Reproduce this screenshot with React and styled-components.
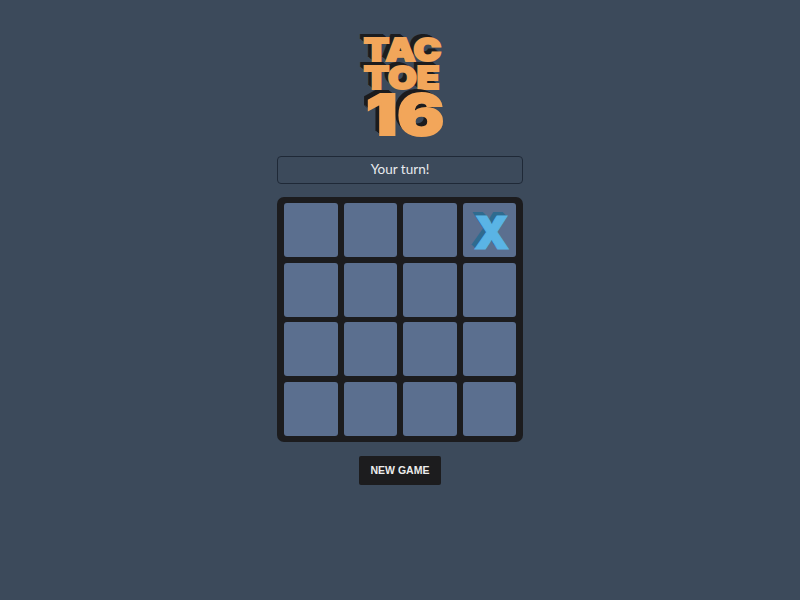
import React from "react";
import styled, { createGlobalStyle } from "styled-components";

const CELLS = ["", "", "", "X", "", "", "", "", "", "", "", "", "", "", "", ""];

function App() {
  return (
    <>
      <GlobalStyle />
      <Page>
        <Logo>
          <LogoWord>TAC</LogoWord>
          <LogoWord>TOE</LogoWord>
          <LogoNumber>16</LogoNumber>
        </Logo>
        <Status>Your turn!</Status>
        <Board>
          {CELLS.map((mark, i) => (
            <Cell key={i}>{mark && <Mark>{mark}</Mark>}</Cell>
          ))}
        </Board>
        <NewGame>NEW GAME</NewGame>
      </Page>
    </>
  );
}

const GlobalStyle = createGlobalStyle`
  html, body {
    margin: 0;
    padding: 0;
    background: #3c4a5b;
  }
`;
const Page = styled.div`
  width: 800px;
  height: 600px;
  box-sizing: border-box;
  padding-top: 36px;
  display: flex;
  flex-direction: column;
  align-items: center;
  background: #3c4a5b;
`;
const Logo = styled.div`
  height: 99px;
  margin-bottom: 21px;
  display: flex;
  flex-direction: column;
  align-items: center;
  font-family: "Inter", "Liberation Sans", sans-serif;
  font-weight: 900;
  color: #f2a65a;
  -webkit-text-stroke: 2px #f2a65a;
  text-shadow: -1px -1px 0 #1c1c1e, -2px -2px 0 #1c1c1e, -3px -3px 0 #1c1c1e,
    -4px -4px 0 #1c1c1e;
`;
const LogoWord = styled.div`
  font-size: 32px;
  line-height: 28px;
  transform: translateX(2px) scaleX(1.16);
`;
const LogoNumber = styled.div`
  font-size: 57px;
  line-height: 43px;
  transform: translate(5px, 1px) scaleX(1.22);
`;
const Status = styled.div`
  box-sizing: border-box;
  width: 246px;
  height: 28px;
  padding-bottom: 2px;
  margin-bottom: 13px;
  display: flex;
  align-items: center;
  justify-content: center;
  border: 1px solid #1f2937;
  border-radius: 4px;
  font-family: "Lato", sans-serif;
  font-weight: 400;
  font-size: 13.5px;
  color: #e9ecef;
`;
const Board = styled.div`
  box-sizing: border-box;
  width: 246px;
  height: 245px;
  padding: 6px 6px 6px 7px;
  display: grid;
  grid-template-columns: repeat(4, 53.7px);
  grid-template-rows: repeat(4, 54px);
  gap: 5.7px 5.9px;
  background: #1c1c1e;
  border-radius: 7px;
  margin-bottom: 14px;
`;
const Cell = styled.div`
  display: flex;
  align-items: center;
  justify-content: center;
  background: #5b6f8f;
  border-radius: 3px;
`;
const Mark = styled.span`
  font-family: "Inter", "Liberation Sans", sans-serif;
  font-weight: 900;
  font-size: 45px;
  line-height: 1;
  color: #5ab4e5;
  -webkit-text-stroke: 1px #5ab4e5;
  transform: translate(2px, 2px);
  text-shadow: -1px -1px 0 #2f6b8f, -2px -2px 0 #2f6b8f, -3px -3px 0 #2f6b8f,
    -4px -4px 0 #2f6b8f;
`;
const NewGame = styled.button`
  box-sizing: border-box;
  width: 82px;
  height: 29px;
  padding: 0 0 1px;
  border: none;
  border-radius: 2px;
  background: #1c1c1e;
  color: #ececec;
  font-family: "Liberation Sans", sans-serif;
  font-weight: 700;
  font-size: 10.5px;
`;

export default App;
